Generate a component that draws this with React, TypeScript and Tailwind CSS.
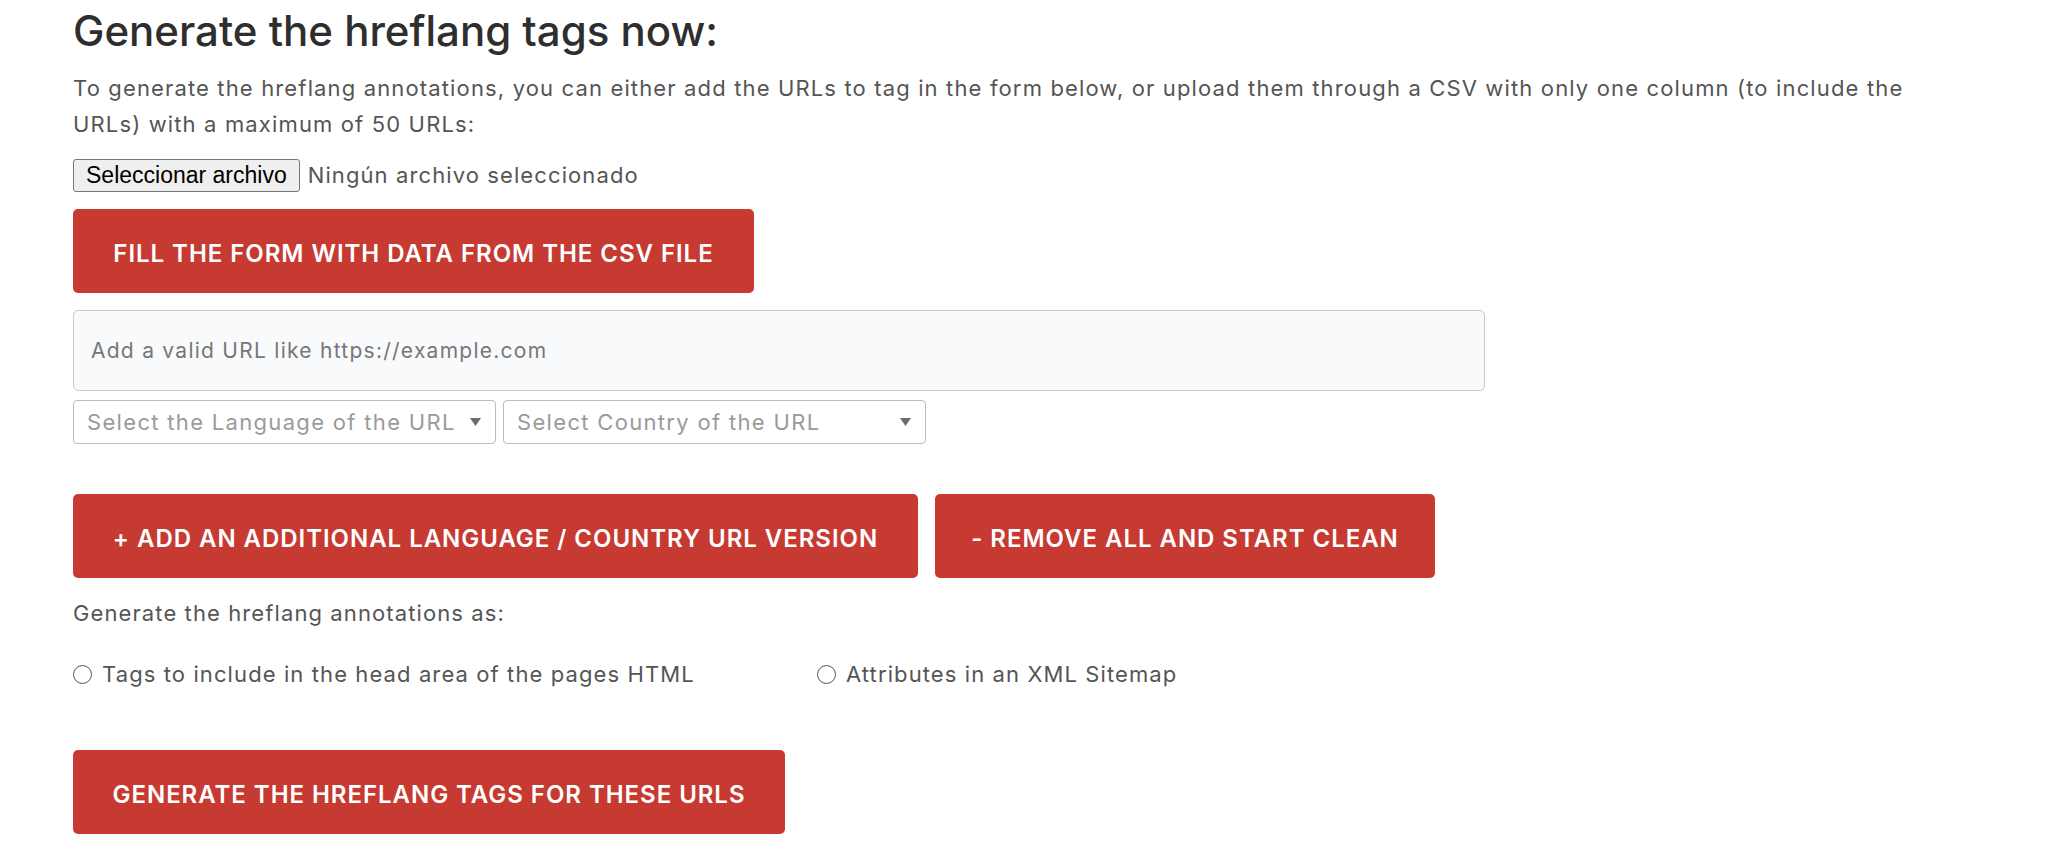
import { useState } from 'react';

const font = { fontFamily: 'Inter, "Open Sans", sans-serif' };

function RedButton({ label, className = '' }: { label: string; className?: string }) {
  return (
    <button
      className={`h-[84px] whitespace-nowrap rounded-[5px] bg-[#c63a32] pt-[5px] text-center text-[24px] font-semibold uppercase tracking-[0.04em] text-white ${className}`}
    >
      {label}
    </button>
  );
}

function FakeSelect({ placeholder }: { placeholder: string }) {
  return (
    <div className="flex h-[44px] w-[423px] items-center justify-between rounded-[4px] border border-[#bdbdbd] bg-white pl-[13px] pr-[14px]">
      <span className="text-[22px] tracking-[0.06em] text-[#9a9a9a]">{placeholder}</span>
      <svg width="11" height="8" viewBox="0 0 11 8">
        <path d="M0 0 H11 L5.5 8 Z" fill="#6b6b6b" />
      </svg>
    </div>
  );
}

export default function App() {
  const [mode, setMode] = useState<'html' | 'xml' | ''>('');

  return (
    <div className="min-h-screen bg-white pl-[73px] pt-[7px] text-[#555]" style={font}>
      {/* Heading */}
      <h2 className="text-[42px] font-medium leading-[48px] text-[#2e2e2e]">Generate the hreflang tags now:</h2>

      <p className="mt-[15px] w-[1870px] text-[22px] leading-[36px] tracking-[0.052em] text-[#555]">
        To generate the hreflang annotations, you can either add the URLs to tag in the form below, or upload them through a
        CSV with only one column (to include the URLs) with a maximum of 50 URLs:
      </p>

      {/* File input */}
      <div className="mt-[17px] flex h-[33px] items-center gap-[8px]">
        <button
          className="h-[33px] rounded-[3px] border border-[#767676] bg-[#efefef] px-[12px] text-[23px] leading-[27px] text-black"
          style={{ fontFamily: '"Liberation Sans", Arial, sans-serif' }}
        >
          Seleccionar archivo
        </button>
        <span className="text-[22px] tracking-[0.05em] text-[#555]">Ningún archivo seleccionado</span>
      </div>

      <RedButton label="Fill the form with data from the CSV file" className="mt-[17px] w-[681px]" />

      {/* URL input */}
      <div className="mt-[17px] flex h-[81px] w-[1412px] items-center rounded-[5px] border border-[#c8c8c8] bg-[#f9fafb] px-[17px]">
        <span className="text-[21px] tracking-[0.06em] text-[#777]">Add a valid URL like https://example.com</span>
      </div>

      <div className="mt-[9px] flex gap-[7px]">
        <FakeSelect placeholder="Select the Language of the URL" />
        <FakeSelect placeholder="Select Country of the URL" />
      </div>

      <div className="mt-[50px] flex gap-[17px]">
        <RedButton label="+ Add an additional language / country URL version" className="w-[845px]" />
        <RedButton label="- Remove all and start clean" className="w-[500px]" />
      </div>

      <div className="mt-[17px] text-[22px] leading-[36px] tracking-[0.05em] text-[#555]">
        Generate the hreflang annotations as:
      </div>

      <div className="mt-[25px] grid w-[1488px] grid-cols-2 text-[22px] leading-[36px] tracking-[0.05em] text-[#555]">
        <label className="flex items-center gap-[10px]" onClick={() => setMode('html')}>
          <span className="flex h-[19px] w-[19px] items-center justify-center rounded-full border-[1.5px] border-[#555]">
            {mode === 'html' && <span className="h-[9px] w-[9px] rounded-full bg-[#555]" />}
          </span>
          Tags to include in the head area of the pages HTML
        </label>
        <label className="flex items-center gap-[10px]" onClick={() => setMode('xml')}>
          <span className="flex h-[19px] w-[19px] items-center justify-center rounded-full border-[1.5px] border-[#555]">
            {mode === 'xml' && <span className="h-[9px] w-[9px] rounded-full bg-[#555]" />}
          </span>
          Attributes in an XML Sitemap
        </label>
      </div>

      <RedButton label="Generate the hreflang tags for these URLs" className="mt-[58px] w-[712px]" />
    </div>
  );
}
